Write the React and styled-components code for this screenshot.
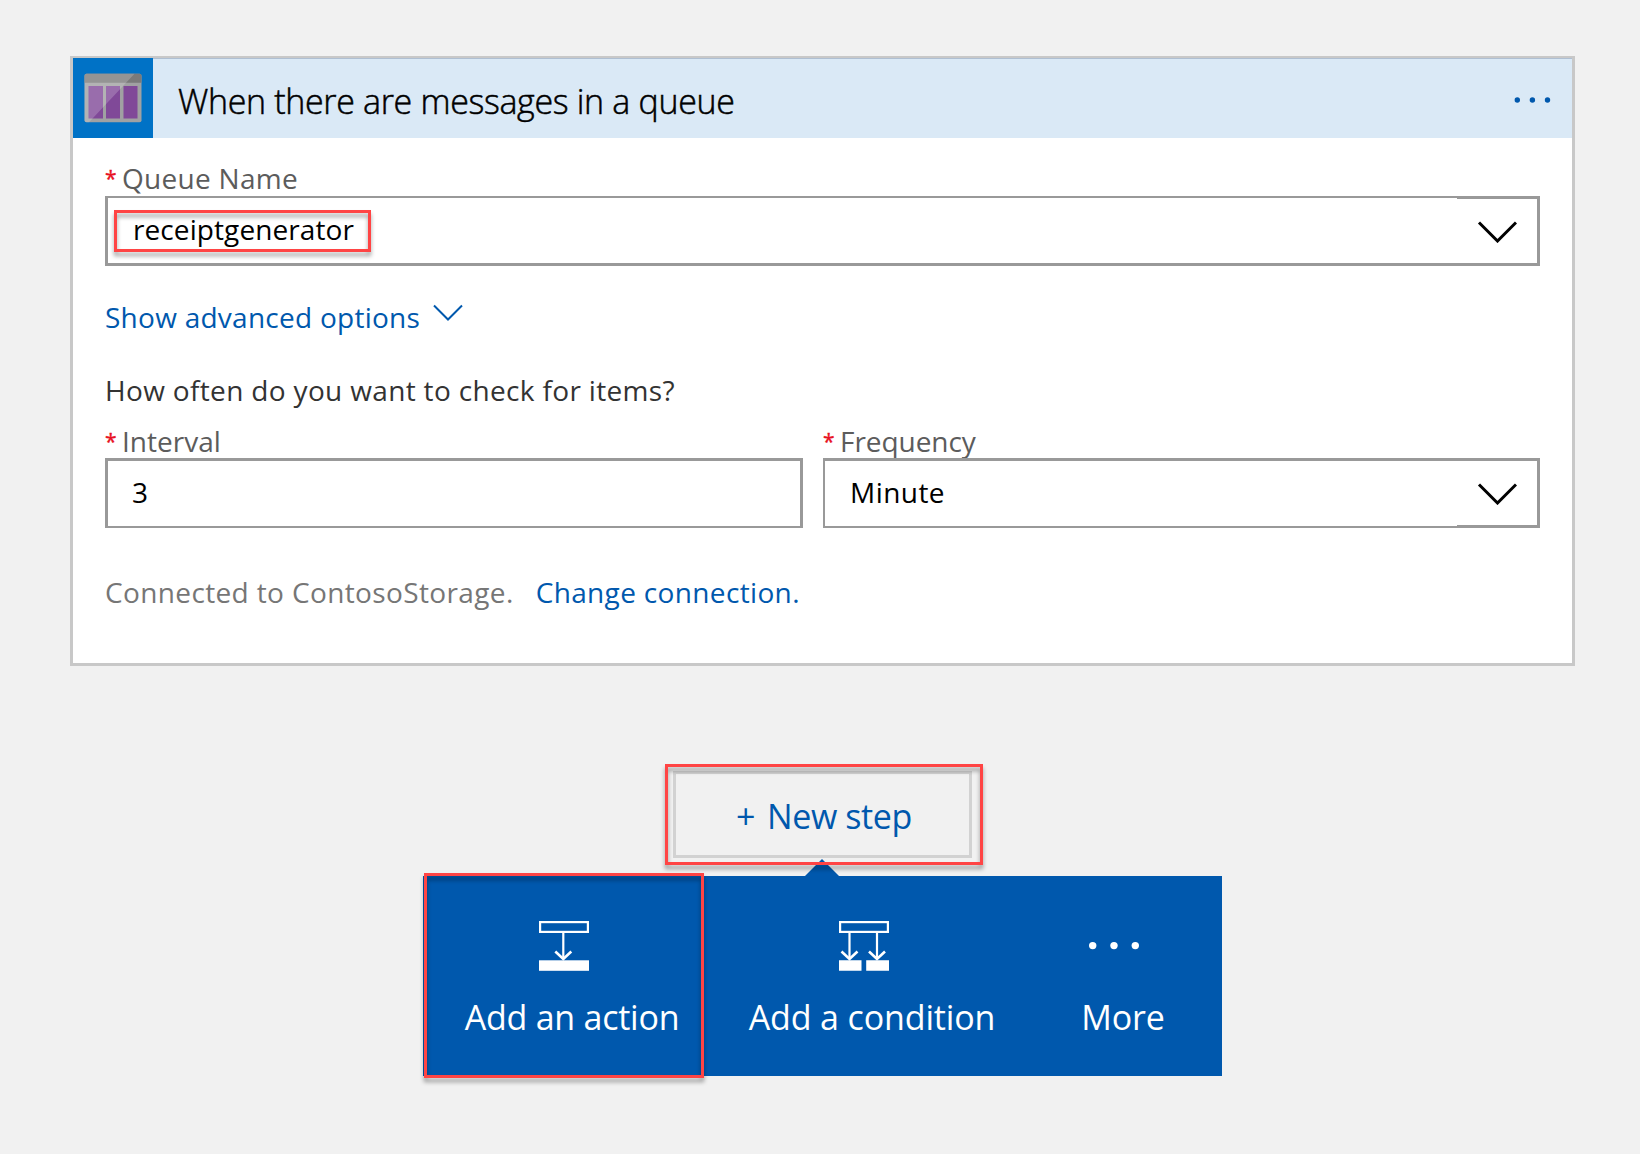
import React from "react";
import styled, { createGlobalStyle, css } from "styled-components";

const colors = {
  page: "#f1f1f1",
  link: "#0058ad",
  highlight: "#ff4444",
  field: "#999999",
};

const GlobalStyle = createGlobalStyle`
  * { box-sizing: border-box; }
  body {
    margin: 0;
    background: ${colors.page};
    font-family: "Open Sans", "Noto Sans", sans-serif;
    color: #000;
  }
`;

const Page = styled.main`
  display: flex;
  flex-direction: column;
  align-items: center;
  width: 1505px;
  min-height: 1154px;
  margin-left: 70px;
  padding-top: 56px;
`;

const Card = styled.section`
  width: 100%;
  height: 610px;
  background: #fff;
  border: solid #c8c8c8;
  border-width: 2px 3px 3px;
`;

const CardHeader = styled.header`
  display: flex;
  align-items: center;
  height: 80px;
  padding-right: 21px;
  background: #dae9f6;
  box-shadow: inset 0 1px 0 #afbfd2;
`;

const ConnectorTile = styled.div`
  display: flex;
  align-items: center;
  justify-content: center;
  width: 80px;
  height: 80px;
  background: #0072c6;
`;

const Title = styled.h1`
  flex: 1;
  margin: 0 0 0 25px;
  padding-top: 5px;
  font-size: 34px;
  font-weight: 300;
  line-height: 48px;
  letter-spacing: -0.36px;
  word-spacing: 0.1px;
  -webkit-text-stroke: 0.5px #000;
`;

const CardBody = styled.div`
  display: flex;
  flex-direction: column;
  padding: 20px 32px 0;
`;

const Text = styled.span`
  font-size: 28px;
  line-height: 40px;
  white-space: nowrap;
  color: ${(p) => p.$color || "#000"};
  letter-spacing: ${(p) => p.$tracking || 0}px;
`;

const Label = styled.label`
  display: flex;
  height: ${(p) => p.$height}px;
  line-height: ${(p) => p.$line || p.$height}px;
  font-size: 28px;
  color: #5c5c5c;
  letter-spacing: ${(p) => p.$tracking || 0}px;
`;

const Required = styled.span`
  width: 17px;
  font-size: 21px;
  color: #e81123;
  -webkit-text-stroke: 0.4px #e81123;
`;

const Field = styled.div`
  position: relative;
  display: flex;
  align-items: center;
  justify-content: space-between;
  height: 70px;
  padding: 0 20px 3px ${(p) => p.$indent}px;
  border: solid ${colors.field};
  border-width: ${(p) => p.$borders};
`;

/* The drop-down button repeats the thinner field edge one pixel thicker. */
const Thickening = styled.span`
  position: absolute;
  right: 0;
  width: 80px;
  height: 1px;
  background: ${colors.field};
  ${(p) => (p.$edge === "top" ? css`top: 0;` : css`bottom: 0;`)}
`;

const Row = styled.div`
  display: flex;
  gap: ${(p) => p.$gap || 0}px;
  margin-top: ${(p) => p.$top}px;
`;

const Column = styled.div`
  display: flex;
  flex-direction: column;
  width: ${(p) => p.$width}px;
`;

const Highlight = styled.span`
  position: absolute;
  left: ${(p) => p.$x}px;
  top: ${(p) => p.$y}px;
  width: ${(p) => p.$w}px;
  height: ${(p) => p.$h}px;
  border: 3px solid ${colors.highlight};
  filter: drop-shadow(0 4px 2px rgba(0, 0, 0, 0.38));
  pointer-events: none;
  z-index: 2;
`;

const StepArea = styled.div`
  display: flex;
  flex-direction: column;
  align-items: center;
  margin-top: 105px;
`;

const NewStepButton = styled.div`
  position: relative;
  display: flex;
  gap: 12px;
  width: 299px;
  height: 87px;
  padding: 3px 0 0 60px;
  border: 3px solid #d2d2d2;
  align-items: center;
  font-size: 34px;
  letter-spacing: -0.4px;
  color: ${colors.link};
`;

const StepMenu = styled.nav`
  position: relative;
  display: grid;
  grid-template-columns: 297px 303px 199px;
  height: 200px;
  margin-top: 18px;
  background: ${colors.link};
`;

const Caret = styled.span`
  position: absolute;
  left: 382px;
  top: -17px;
  border: solid transparent;
  border-width: 0 17.5px 17px;
  border-bottom-color: ${colors.link};
`;

const MenuItem = styled.div`
  display: flex;
  flex-direction: column;
  align-items: center;
  padding: 45px 0 0 1px;
  font-size: 34px;
  line-height: 46px;
  letter-spacing: ${(p) => p.$tracking}px;
  white-space: nowrap;
  color: #fff;

  svg {
    margin: 0 ${(p) => p.$iconShift}px 23px 0;
  }
`;

const QueueIcon = () => (
  <svg width="58" height="50" viewBox="0 0 58 50">
    <rect x="0.5" y="0.8" width="57" height="48.400" rx="2" fill="#a0a1a2" />
    <path d="M2.5 0.8H55.5a2 2 0 0 1 2 2V9.800H0.500V2.800a2 2 0 0 1 2-2z" fill="#7a7a7a" />
    <rect x="4.500" y="13" width="14.500" height="32.500" fill="#804998" />
    <rect x="22" y="13" width="14" height="32.500" fill="#804998" />
    <rect x="39.500" y="13" width="14" height="32.500" fill="#804998" />
    <path d="M2.500 0.800H50.500L5 49.200H2.500a2 2 0 0 1-2-2V2.800a2 2 0 0 1 2-2z" fill="#fff" opacity="0.2" />
  </svg>
);

const FieldChevron = styled.svg`
  margin-top: ${(p) => p.$drop}px;
  fill: none;
  stroke: #000;
  stroke-width: 3;
`;

const Chevron = ({ drop }) => (
  <FieldChevron $drop={drop} width="40" height="22" viewBox="0 0 40 22">
    <path d="M2 1.500L20.500 20L39 1.500" />
  </FieldChevron>
);

const SmallChevron = styled.svg`
  margin: 7px 0 0 13px;
  fill: none;
  stroke: ${colors.link};
  stroke-width: 2;
`;

const DotsIcon = styled.svg`
  margin-top: 4px;
  fill: ${colors.link};
`;

const HeaderDots = () => (
  <DotsIcon width="37" height="6" viewBox="0 0 37 6">
    <circle cx="3.300" cy="3" r="2.700" />
    <circle cx="18.400" cy="3" r="2.700" />
    <circle cx="33.500" cy="3" r="2.700" />
  </DotsIcon>
);

const ActionIcon = () => (
  <svg width="50" height="50" viewBox="0 0 50 50" fill="none" stroke="#fff" strokeWidth="2.2">
    <rect x="1.100" y="1.100" width="47.800" height="9.800" />
    <path d="M24.300 11V38" />
    <path d="M16.300 30.500L24.300 38L32.300 30.500" strokeWidth="2.600" />
    <rect x="0" y="39.300" width="50" height="10.500" fill="#fff" stroke="none" />
  </svg>
);

const ConditionIcon = () => (
  <svg width="50" height="50" viewBox="0 0 50 50" fill="none" stroke="#fff" strokeWidth="2.2">
    <rect x="1.100" y="1.100" width="47.800" height="9.800" />
    <path d="M10.500 11V38M38 11V38" />
    <path d="M2.500 30.500L10.500 38L18.500 30.500M30 30.500L38 38L46 30.500" strokeWidth="2.600" />
    <path d="M0 39.300H22.500V49.800H0zM27.200 39.300H50V49.800H27.200z" fill="#fff" stroke="none" />
  </svg>
);

const MoreIcon = () => (
  <svg width="50" height="50" viewBox="0 0 50 50" fill="#fff">
    <circle cx="3.700" cy="24.600" r="3.700" />
    <circle cx="25" cy="24.600" r="3.700" />
    <circle cx="46.300" cy="24.600" r="3.700" />
  </svg>
);

export default function App() {
  return (
    <>
      <GlobalStyle />
      <Page>
        <Card>
          <CardHeader>
            <ConnectorTile>
              <QueueIcon />
            </ConnectorTile>
            <Title>When there are messages in a queue</Title>
            <HeaderDots />
          </CardHeader>

          <CardBody>
            <Label $height={38} $line={40} $tracking={0.29}>
              <Required>*</Required>
              Queue Name
            </Label>
            <Field $indent={25} $borders="2px 3px 3px 3px">
              <Thickening $edge="top" />
              <Text $tracking={0.09}>receiptgenerator</Text>
              <Chevron drop={6} />
              <Highlight $x={6} $y={12} $w={257} $h={42} />
            </Field>

            <Row $top={31}>
              <Text $color={colors.link} $tracking={0.26}>Show advanced options</Text>
              <SmallChevron width="30" height="18" viewBox="0 0 30 18">
                <path d="M1 1.500L15 15.500L29 1.500" />
              </SmallChevron>
            </Row>

            <Row $top={33}>
              <Text $color="#333" $tracking={0.34}>How often do you want to check for items?</Text>
            </Row>

            <Row $top={14} $gap={20}>
              <Column $width={698}>
                <Label $height={34}>
                  <Required>*</Required>
                  Interval
                </Label>
                <Field $indent={24} $borders="3px 3px 2px 3px">
                  <Text>3</Text>
                </Field>
              </Column>
              <Column $width={717}>
                <Label $height={34} $tracking={-0.05}>
                  <Required>*</Required>
                  Frequency
                </Label>
                <Field $indent={25} $borders="3px 3px 2px 2px">
                  <Thickening $edge="bottom" />
                  <Text $tracking={0.45}>Minute</Text>
                  <Chevron drop={4} />
                </Field>
              </Column>
            </Row>

            <Row $top={44} $gap={22}>
              <Text $color="#767676" $tracking={0.37}>Connected to ContosoStorage.</Text>
              <Text $color={colors.link} $tracking={0.35}>Change connection.</Text>
            </Row>
          </CardBody>
        </Card>

        <StepArea>
          <NewStepButton>
            <span>+</span>
            <span>New step</span>
            <Highlight $x={-11} $y={-10} $w={318} $h={101} />
          </NewStepButton>
          <StepMenu>
            <Caret />
            <MenuItem $tracking={-0.24} $iconShift={16}>
              <ActionIcon />
              Add an action
            </MenuItem>
            <MenuItem $tracking={-0.13} $iconShift={16}>
              <ConditionIcon />
              Add a condition
            </MenuItem>
            <MenuItem $tracking={-0.14} $iconShift={19}>
              <MoreIcon />
              More
            </MenuItem>
            <Highlight $x={1} $y={-3} $w={280} $h={205} />
          </StepMenu>
        </StepArea>
      </Page>
    </>
  );
}
